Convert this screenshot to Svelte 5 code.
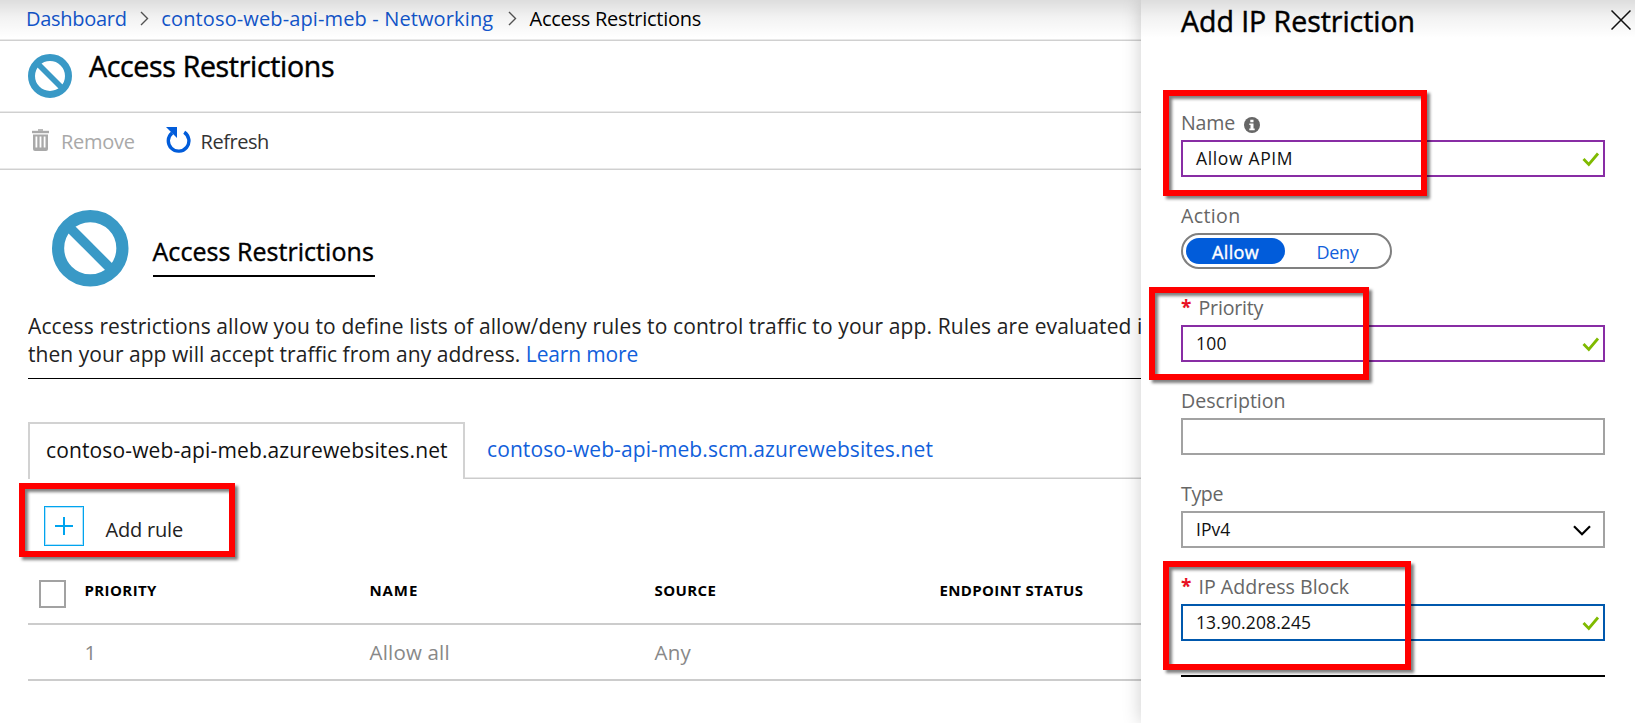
<script>
  const columns = [
    { label: 'PRIORITY', value: '1', spacing: 0.4 },
    { label: 'NAME', value: 'Allow all', spacing: 0.9 },
    { label: 'SOURCE', value: 'Any', spacing: 0.4 },
    { label: 'ENDPOINT STATUS', value: '', spacing: 0.36 }
  ];
</script>

{#snippet chevron()}
  <svg class="chev" width="9" height="15" viewBox="0 0 9 15"><path d="M1 1l6.5 6.5L1 14" fill="none" stroke="#555" stroke-width="1.4" /></svg>
{/snippet}

{#snippet blocked(size)}
  <svg class="blocked" width={size} height={size} viewBox="0 0 44 44">
    <g fill="none" stroke="#3999c6">
      <circle cx="22" cy="22" r="18.5" stroke-width="7" />
      <path d="M9.5 9.5l25 25" stroke-width="5.6" />
    </g>
  </svg>
{/snippet}

{#snippet check()}
  <svg class="check" width="18" height="15" viewBox="0 0 18 15"><path d="M1.5 7l5.3 5.5L16 1.5" fill="none" stroke="#7fba00" stroke-width="2.8" /></svg>
{/snippet}

<div class="page">
  <main>
    <nav class="crumbs">
      <a class="c1">Dashboard</a>
      {@render chevron()}
      <a class="c2">contoso-web-api-meb - Networking</a>
      {@render chevron()}
      <span class="c3">Access Restrictions</span>
    </nav>

    <header>
      {@render blocked(44)}
      <h1>Access Restrictions</h1>
    </header>

    <div class="toolbar">
      <svg class="trash" width="17" height="22" viewBox="0 0 17 22">
        <path d="M6 1h5" stroke="#a9a9a9" stroke-width="1.6" />
        <path d="M0 3h17" stroke="#a9a9a9" stroke-width="2.4" />
        <path d="M1 5.5h15v14.5q0 2-2 2h-11q-2 0-2-2z" fill="#a9a9a9" />
        <path d="M4.4 7.5v11M8.5 7.5v11M12.6 7.5v11" stroke="#fff" stroke-width="1.8" />
      </svg>
      <span class="remove">Remove</span>
      <svg class="reload" width="25" height="27" viewBox="0 0 25 27">
        <path d="M18.2 5.2A10.3 10.3 0 1 1 6.2 5.8" fill="none" stroke="#015cda" stroke-width="3.4" />
        <path d="M0 0h11v11z" fill="#015cda" />
      </svg>
      <span class="refresh">Refresh</span>
    </div>

    <section class="hero">
      {@render blocked(76.5)}
      <h2>Access Restrictions</h2>
    </section>

    <p class="intro">
      <span class="l1">Access restrictions allow you to define lists of allow/deny rules to control traffic to your app. Rules are evaluated i</span>
      <span class="l2">then your app will accept traffic from any address. <a>Learn more</a></span>
    </p>

    <div class="tabs">
      <div class="tab active">contoso-web-api-meb.azurewebsites.net</div>
      <a class="tab">contoso-web-api-meb.scm.azurewebsites.net</a>
    </div>

    <div class="add">
      <svg width="40" height="40" viewBox="0 0 40 40">
        <rect x="1" y="1" width="38" height="38" fill="none" stroke="#b5e3f9" stroke-width="2" />
        <rect x=".5" y=".5" width="39" height="39" fill="none" stroke="#00a4ef" />
        <path d="M11 20h18M20 11v18" stroke="#00a4ef" stroke-width="2" />
      </svg>
      <span>Add rule</span>
    </div>

    <div class="table">
      <div class="tr head">
        <span class="box"></span>
        {#each columns as col}<b style="letter-spacing:{col.spacing}px">{col.label}</b>{/each}
      </div>
      <div class="tr">
        <span></span>
        {#each columns as col}<span class="cell">{col.value}</span>{/each}
      </div>
    </div>
  </main>

  <aside>
    <div class="titlebar">
      <h1>Add IP Restriction</h1>
      <svg width="20" height="20" viewBox="0 0 20 20"><path d="M.5.5l19 19M19.5.5l-19 19" stroke="#111" stroke-width="1.5" /></svg>
    </div>

    <div class="label tight">Name
      <svg width="16" height="16" viewBox="0 0 16 16">
        <circle cx="8" cy="8" r="8" fill="#666" />
        <path d="M6.3 2.7h3.2v2.5H6.3zM5.3 6.4h4.2v5.2h1.2v1.6H5.3v-1.6h1.2V8H5.3z" fill="#fff" />
      </svg>
    </div>
    <div class="input purple"><span class="apim">Allow APIM</span>{@render check()}</div>

    <div class="label wide">Action</div>
    <div class="toggle"><span class="on">Allow</span><span class="off">Deny</span></div>

    <div class="label tight"><i>*</i>Priority</div>
    <div class="input purple"><span class="hundred">100</span>{@render check()}</div>

    <div class="label">Description</div>
    <div class="input"></div>

    <div class="label tighter">Type</div>
    <div class="input">
      <span>IPv4</span>
      <svg class="drop" width="18" height="11" viewBox="0 0 18 11"><path d="M1 1.2l8 8 8-8" fill="none" stroke="#000" stroke-width="2.2" /></svg>
    </div>

    <div class="label"><i>*</i>IP Address Block</div>
    <div class="input blue"><span class="ip">13.90.208.245</span>{@render check()}</div>

    <div class="end"></div>
  </aside>

  <div class="topshade"></div>
  <div class="mark m1"></div>
  <div class="mark m2"></div>
  <div class="mark m3"></div>
  <div class="mark m4"></div>
</div>

<style>
  :global(body) { margin: 0; background: #fff; }
  .page {
    position: relative; display: flex; width: 1635px; height: 723px; overflow: hidden;
    font: 400 20px/28px "Open Sans", "Noto Sans", sans-serif; color: #222; white-space: nowrap;
  }
  svg { display: block; flex: none; }
  h1, h2, p { margin: 0; font-weight: 400; }
  a { color: #1160db; }
  main { width: 1141px; flex: none; overflow: hidden; }

  .crumbs, header, .toolbar {
    box-sizing: border-box; border-bottom: 1px solid #d0d0d0; box-shadow: inset 0 -1px #e9e9e9;
  }
  .crumbs {
    display: grid; grid-template-columns: 114px 21.3px 346.7px 21.5px auto;
    height: 41px; padding: 5px 0 0 26px;
  }
  .crumbs a { color: #1257cf; }
  .chev { margin-top: 6px; }
  .c1 { letter-spacing: -.285px; }
  .c2 { letter-spacing: .128px; }
  .c3 { letter-spacing: -.25px; color: #000; }

  header { display: flex; height: 72px; padding: 5px 0 0 28px; }
  header .blocked { margin-top: 8px; }
  h1 {
    font-size: 28.5px; line-height: 40px; color: #000; -webkit-text-stroke: .45px #000;
  }
  header h1 { margin-left: 17px; letter-spacing: -.32px; }

  .toolbar { display: flex; height: 57px; padding: 14px 0 0 32px; }
  .trash { margin-top: 2px; }
  .remove { margin: 1px 0 0 12px; width: 105px; color: #a9a9a9; letter-spacing: -.26px; }
  .refresh { margin: 1px 0 0 9.5px; color: #333; letter-spacing: -.45px; }

  .hero { display: flex; padding: 40px 0 0 52px; height: 102px; }
  h2 {
    margin: 24px 0 0 24px; width: 222px; height: 41px; border-bottom: 2px solid #000;
    font-size: 25px; line-height: 34px; letter-spacing: .05px; color: #000; -webkit-text-stroke: .4px #000;
  }

  .intro {
    display: flex; flex-direction: column; margin-left: 28px; height: 66px;
    font-size: 21px; border-bottom: 1px solid #000; overflow: hidden;
  }
  .l1 { letter-spacing: .105px; }
  .l2 { letter-spacing: .045px; }
  .l2 a { letter-spacing: -.15px; }

  .tabs { display: flex; margin: 43px 0 0 28px; height: 57px; font-size: 21px; }
  .tab { flex: 1; box-sizing: border-box; padding: 13px 0 0 22px; letter-spacing: .1px; border-bottom: 1px solid #ccc; box-shadow: inset 0 -1px #e6e6e6; }
  .tab.active {
    flex: none; width: 437px; padding: 12px 0 0 16px; border: 2px solid #d2d2d2; border-bottom: 0;
    box-shadow: none; letter-spacing: .13px; color: #111;
  }

  .add { display: flex; height: 74px; padding: 27px 0 0 44px; }
  .add span { margin: 10px 0 0 21.5px; letter-spacing: -.2px; }

  .table { margin: 0 0 0 28px; }
  .tr {
    display: grid; grid-template-columns: 56.5px repeat(4, 285px); box-sizing: border-box;
    height: 56px; padding-top: 13px; border-bottom: 2px solid #ccc; overflow: hidden;
  }
  .head { height: 45px; padding-top: 0; }
  .box { box-sizing: border-box; width: 27px; height: 28px; margin-left: 11px; border: 2px solid #a2a2a2; }
  .tr b { font-size: 15px; line-height: 20px; font-weight: 700; color: #000; }
  .cell { font-size: 20.5px; letter-spacing: .19px; color: #888; }

  aside {
    position: relative; box-sizing: border-box; flex: none; width: 494px; background: #fff;
    padding: 1px 30px 0 40px; box-shadow: 0 0 18px rgba(0, 0, 0, .2);
  }
  .titlebar { display: flex; justify-content: space-between; height: 108px; margin-right: -26px; }
  .titlebar h1 { letter-spacing: -.03px; }
  .titlebar svg { margin-top: 9px; }

  .label { display: flex; height: 31px; font-size: 19.6px; line-height: 27px; color: #666; }
  .label svg { margin: 8px 0 0 9px; }
  .label i { width: 17.5px; font-style: normal; font-weight: 700; font-size: 19px; color: #e81123; }
  .tight { letter-spacing: -.2px; }
  .tighter { letter-spacing: -.4px; }
  .wide { letter-spacing: .35px; }

  .input {
    display: flex; justify-content: space-between; box-sizing: border-box; height: 37px; margin-bottom: 25px;
    padding: 0 3px 0 13px; border: 2px solid #a2a2a2; font-size: 17.5px; line-height: 33px; color: #111;
  }
  .purple { border-color: #882da4; }
  .blue { border-color: #0058ad; }
  .apim { letter-spacing: .65px; }
  .hundred { letter-spacing: .3px; }
  .ip { letter-spacing: .1px; }
  .check { margin-top: 10px; }
  .drop { margin: 12px 9px 0 0; }

  .toggle {
    display: flex; box-sizing: border-box; width: 211px; height: 36px; margin-bottom: 25px; padding: 3px;
    border: 2px solid #808080; border-radius: 18px; font-size: 18px; line-height: 28px;
  }
  .on {
    width: 99px; height: 26px; border-radius: 13px; background: #015cda; color: #fff;
    text-align: center; letter-spacing: .35px; -webkit-text-stroke: .4px #fff;
  }
  .off { margin-left: 31.5px; color: #1160db; letter-spacing: -.3px; }
  .end { margin-top: 34px; height: 2px; background: #000; }

  .topshade {
    position: absolute; inset: 0 0 auto 0; height: 38px;
    background: linear-gradient(rgba(0, 0, 0, .135), rgba(0, 0, 0, .05) 45%, transparent);
  }
  .mark {
    position: absolute; box-sizing: border-box; border: 6px solid #f00;
    filter: drop-shadow(3px 3px 1.5px rgba(0, 0, 0, .5));
  }
  .m1 { left: 1163px; top: 90px; width: 264px; height: 106px; }
  .m2 { left: 1149px; top: 287px; width: 220px; height: 93px; }
  .m3 { left: 1163px; top: 561px; width: 248px; height: 109px; }
  .m4 { left: 19px; top: 483px; width: 216px; height: 74px; }
</style>
